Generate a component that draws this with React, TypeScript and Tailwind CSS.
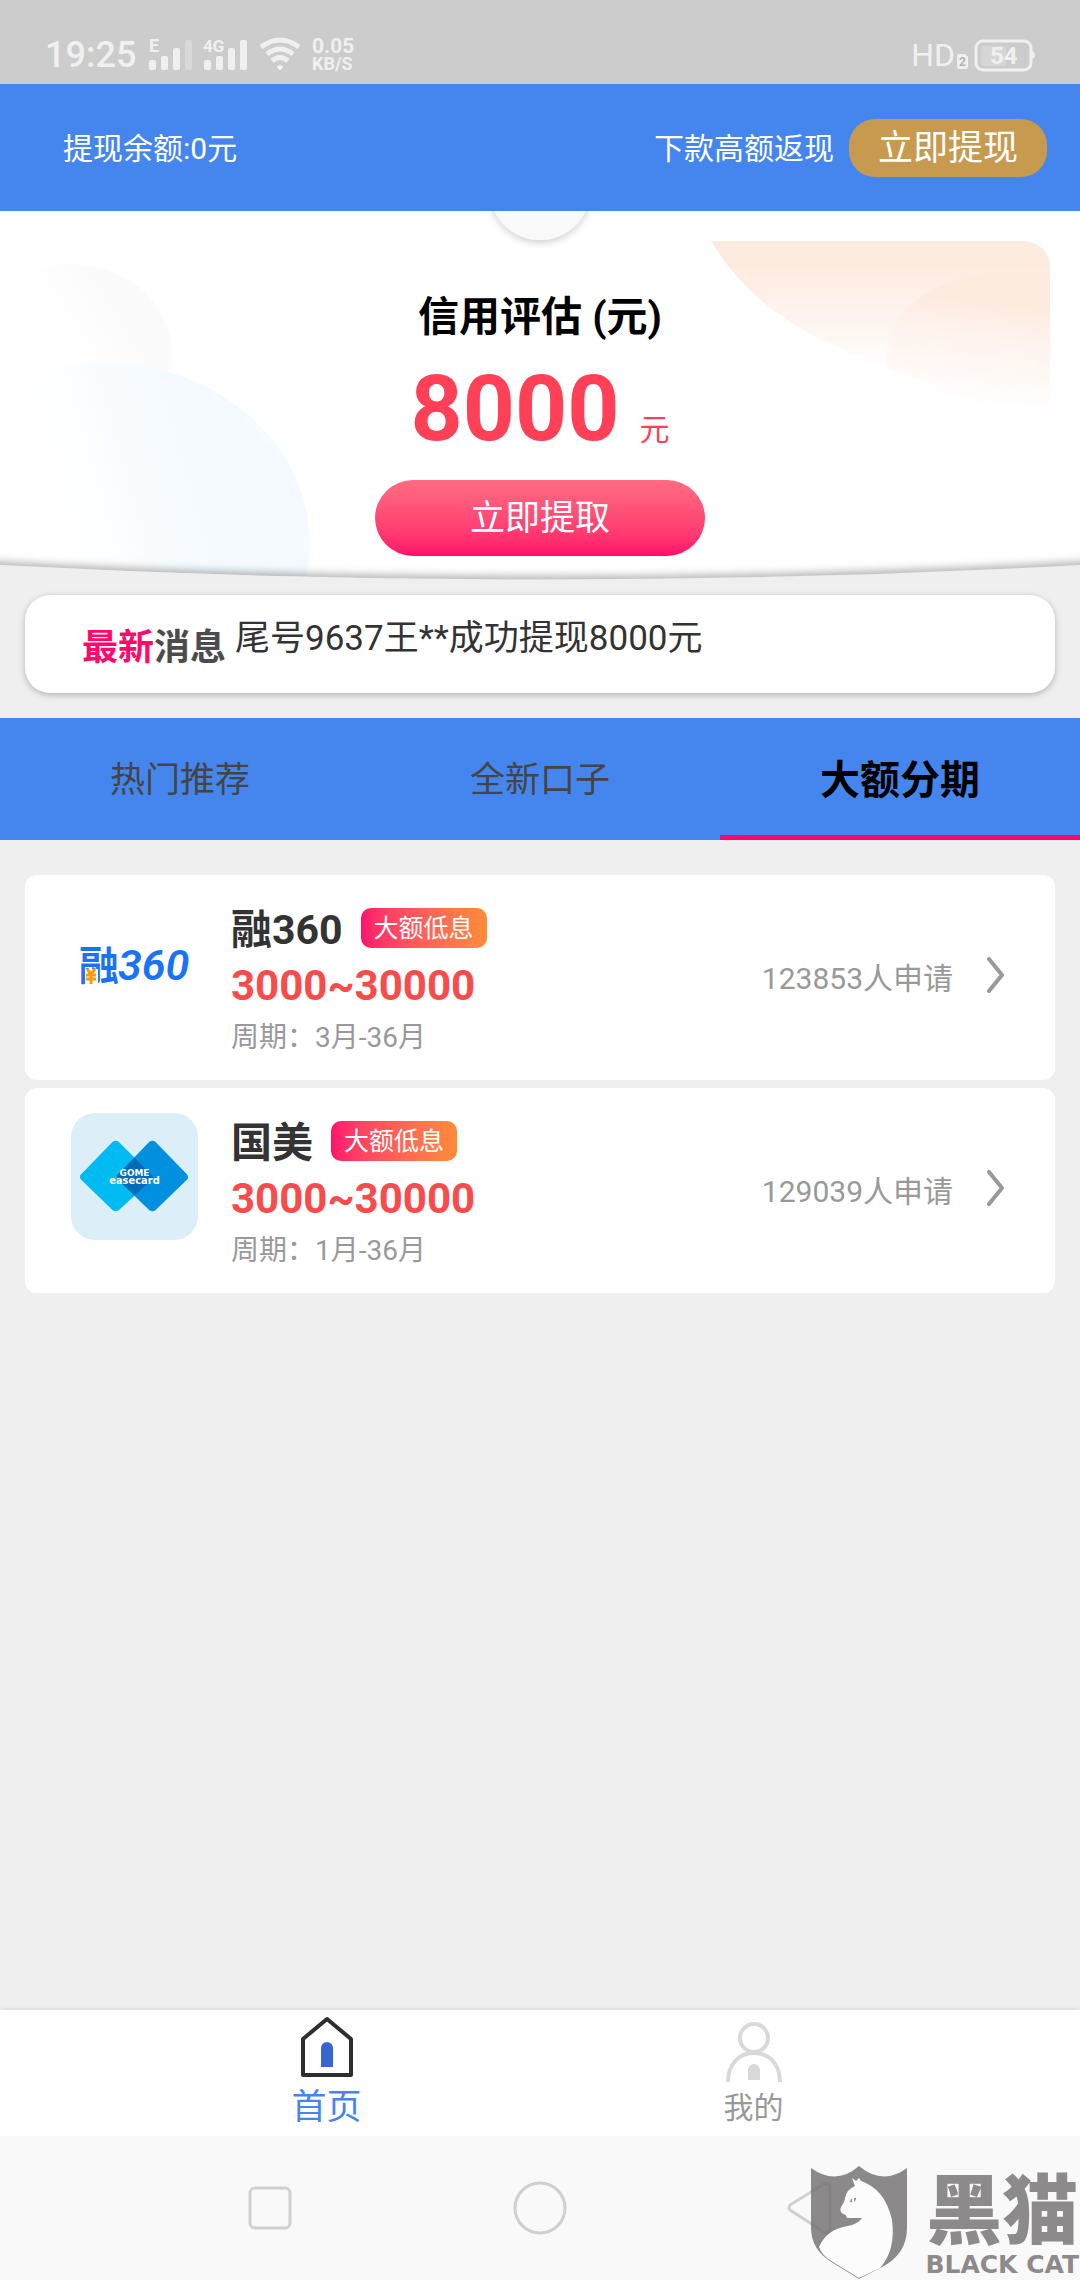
import React, { useState } from 'react';

interface Loan {
  id: string;
  name: string;
  tag: string;
  amount: string;
  period: string;
  applied: number;
  logo: React.ReactNode;
}

const TABS = ['热门推荐', '全新口子', '大额分期'];

function StatusBar() {
  return (
    <div className="flex h-[84px] items-end justify-between bg-[#cccccc] pr-[45px] pb-[11px] pl-[45px] text-[#f0f0f0]">
      <div className="flex items-center">
        <span className="w-[102px] pt-[2px] text-[36px] leading-[36px] font-medium">19:25</span>
        <svg width="100" height="38" viewBox="-2 -3 100 38" fill="#f0f0f0">
          <text x="0" y="14" fontSize="18" fontWeight="700">E</text>
          <rect x="0" y="22" width="7" height="10" rx="2" />
          <rect x="12" y="18" width="7" height="14" rx="2" />
          <rect x="24" y="10" width="7" height="22" rx="2" />
          <rect x="36" y="2" width="7" height="30" rx="2" fill="#d9d9d9" />
          <text x="54" y="14" fontSize="17" fontWeight="700">4G</text>
          <rect x="55" y="22" width="7" height="10" rx="2" />
          <rect x="67" y="18" width="7" height="14" rx="2" />
          <rect x="79" y="10" width="7" height="22" rx="2" />
          <rect x="91" y="2" width="7" height="30" rx="2" />
        </svg>
        <svg className="ml-3" width="42" height="34" viewBox="0 0 42 34" fill="none" stroke="#f0f0f0" strokeWidth="5">
          <path d="M2 10 Q21 -4 40 10" />
          <path d="M8 17 Q21 7 34 17" />
          <path d="M13 24 Q21 17 29 24" />
          <path d="M18 30 Q21 27 24 30 L21 33 Z" fill="#f0f0f0" strokeWidth="1" />
        </svg>
        <div className="ml-[11px] flex flex-col pt-[2px] font-bold">
          <span className="text-[21px] leading-[18px]">0.05</span>
          <span className="text-[18px] leading-[18px]">KB/S</span>
        </div>
      </div>
      <div className="flex items-center">
        <span className="text-[32px] leading-[36px]">HD</span>
        <svg width="80" height="34" viewBox="0 0 80 34">
          <path d="M4 16h6l3 3v10a2 2 0 0 1-2 2H4a2 2 0 0 1-2-2V18a2 2 0 0 1 2-2z" fill="#f0f0f0" />
          <text x="4" y="28" fontSize="12" fontWeight="700" fill="#b4b4b4">2</text>
          <rect x="26" y="8" width="25" height="20" rx="3" fill="#d6d6d6" />
          <rect x="21" y="3" width="55" height="29" rx="7" fill="none" stroke="#f0f0f0" strokeWidth="3" />
          <path d="M77 13q3 1 3 4t-3 4z" fill="#f0f0f0" />
          <text x="35" y="26" fontSize="24" fontWeight="700" fill="#f0f0f0">54</text>
        </svg>
      </div>
    </div>
  );
}

function HeroBackdrop() {
  return (
    <svg
      className="absolute inset-0 h-full w-full"
      viewBox="0 0 1080 370"
      preserveAspectRatio="none"
      aria-hidden="true"
    >
      <defs>
        <linearGradient id="blueFade" gradientUnits="userSpaceOnUse" x1="60" y1="300" x2="200" y2="260">
          <stop offset="0" stopColor="#f4faff" stopOpacity="0" />
          <stop offset="1" stopColor="#f4faff" />
        </linearGradient>
        <linearGradient id="greyFade" gradientUnits="userSpaceOnUse" x1="60" y1="140" x2="140" y2="90">
          <stop offset="0" stopColor="#fbfafa" stopOpacity="0" />
          <stop offset="1" stopColor="#fbfafa" />
        </linearGradient>
        <linearGradient id="peach" gradientUnits="userSpaceOnUse" x1="0" y1="30" x2="0" y2="160">
          <stop offset="0.2" stopColor="#feebe0" />
          <stop offset="0.6" stopColor="#fef4ef" />
          <stop offset="1" stopColor="#ffffff" />
        </linearGradient>
        <linearGradient id="peachInner" gradientUnits="userSpaceOnUse" x1="960" y1="62" x2="945" y2="195">
          <stop offset="0.2" stopColor="#feebe0" />
          <stop offset="0.5" stopColor="#fef4ef" />
          <stop offset="1" stopColor="#ffffff" />
        </linearGradient>
        <clipPath id="heroShape">
          <path d="M0 0H1080V355Q540 384 0 355Z" />
        </clipPath>
        <clipPath id="banner">
          <rect x="31" y="30" width="1019" height="400" rx="26" />
        </clipPath>
        <filter id="soft" filterUnits="userSpaceOnUse" x="-60" y="320" width="1200" height="100">
          <feGaussianBlur stdDeviation="5" />
        </filter>
        <filter id="knob" x="-50%" y="-50%" width="200%" height="200%">
          <feDropShadow dx="0" dy="3" stdDeviation="4" floodColor="#000000" floodOpacity="0.18" />
        </filter>
      </defs>
      <g clipPath="url(#heroShape)">
        <rect width="1080" height="370" fill="#ffffff" />
        <g clipPath="url(#banner)">
          <ellipse cx="70" cy="141" rx="101" ry="88" fill="url(#greyFade)" />
          <ellipse cx="103" cy="334" rx="207" ry="182" fill="#ffffff" />
          <ellipse cx="103" cy="334" rx="207" ry="182" fill="url(#blueFade)" />
          <path d="M711 30C750 95 810 130 884 155C940 174 1000 200 1050 232V30Z" fill="url(#peach)" />
          <path d="M886 158C880 100 940 50 1050 64V235C1000 205 940 174 886 158Z" fill="url(#peachInner)" />
        </g>
        <path d="M-20 356Q540 387 1100 356" fill="none" stroke="#7f7f7c" strokeOpacity="0.8" strokeWidth="8" filter="url(#soft)" />
        <circle cx="540" cy="-21" r="50" fill="#fafafa" filter="url(#knob)" />
      </g>
    </svg>
  );
}

function Rong360Logo() {
  return (
    <svg className="h-[127px] w-[127px]" viewBox="0 0 127 127" role="img" aria-label="融360">
      <text x="8" y="80" fontSize="40" fontWeight="700" fill="#1a73f5">融</text>
      <rect x="14" y="69" width="13" height="16" fill="#ffffff" />
      <path d="M16 69L20 74L24 69M15 75H25M15 79H25M20 74V84" fill="none" stroke="#ff9a0a" strokeWidth="3" />
      <text x="47" y="80" fontSize="43" fontStyle="italic" fontWeight="600" fill="#1a73f5">360</text>
    </svg>
  );
}

function GomeLogo() {
  return (
    <svg className="h-[127px] w-[127px]" viewBox="0 0 128 128" role="img" aria-label="GOME easecard">
      <rect width="128" height="128" rx="24" fill="#dceff9" />
      <path d="M42 29q3-2 6 0L81 62q3 3 0 6L48 98q-3 2-6 0L10 67q-2-3 0-5z" fill="#00baf2" />
      <path d="M79 29q3-2 6 0L117 62q2 3 0 5L85 98q-3 2-6 0L47 67q-2-3 0-5z" fill="#0090df" />
      <path d="M64 45L81 62q3 3 0 6L64 83L47 67q-2-3 0-5z" fill="#006cb8" />
      <g fill="#ffffff" fontFamily="'DejaVu Sans', sans-serif" fontWeight="700" textAnchor="middle">
        <text x="64" y="63" fontSize="9">GOME</text>
        <text x="64" y="72" fontSize="10">easecard</text>
      </g>
    </svg>
  );
}

const LOANS: Loan[] = [
  {
    id: 'rong360',
    name: '融360',
    tag: '大额低息',
    amount: '3000~30000',
    period: '3月-36月',
    applied: 123853,
    logo: <Rong360Logo />,
  },
  {
    id: 'gome',
    name: '国美',
    tag: '大额低息',
    amount: '3000~30000',
    period: '1月-36月',
    applied: 129039,
    logo: <GomeLogo />,
  },
];

function LoanCard({ loan }: { loan: Loan }) {
  return (
    <a href={`#${loan.id}`} className="flex h-[205px] items-start rounded-xl bg-white pr-[50px] pl-[46px]">
      <div className="mt-[25px] shrink-0">{loan.logo}</div>
      <div className="mt-[29px] ml-[33px] flex-1">
        <div className="flex h-12 items-center gap-[18px]">
          <h2 className="pt-1 text-[41px] leading-[48px] font-bold text-[#333333]">{loan.name}</h2>
          <span className="h-10 rounded-[10px] bg-linear-to-r from-[#ff0f6b] to-[#ff8b38] px-[13px] text-[25px] leading-[42px] text-white">
            {loan.tag}
          </span>
        </div>
        <p className="mt-2 text-[42px] leading-[52px] font-bold text-[#f84c4c]">{loan.amount}</p>
        <p className="mt-[6px] text-[28px] leading-[40px] text-[#999999]">周期：{loan.period}</p>
      </div>
      <div className="mt-[82px] flex items-start">
        <span className="text-[30px] leading-[44px] text-[#999999]">{loan.applied}人申请</span>
        <svg className="ml-[34px]" width="18" height="36" viewBox="0 0 18 36" fill="none" stroke="#999999" strokeWidth="4">
          <path d="M2 2L15 18L2 34" strokeLinecap="round" strokeLinejoin="round" />
        </svg>
      </div>
    </a>
  );
}

function Watermark() {
  return (
    <div className="absolute right-[1px] bottom-0 flex items-end gap-4 text-[#8d8a8c]">
      <svg width="99" height="114" viewBox="0 0 99 114">
        <path
          d="M1 2Q26 20 49 0Q73 20 97 2V62Q97 88 72 101L49 113L23 97Q1 84 1 62Z"
          fill="#716d6f"
          fillOpacity="0.8"
        />
        <path
          d="M42 12L46 15L49 12L51 15Q75 23 82 54Q86 84 70 102L49 112L23 96Q12 90 9 81Q17 63 38 60Q48 58 52 52L37 52Q36 48 33 48Q29 45 31 41Q35 35 35 32Q37 23 45 20Z"
          fill="#fcfcfc"
        />
        <path d="M40 36Q41 31 46 32Q46 37 40 36Z" fill="#8d8a8c" />
        <path d="M43 31V37" stroke="#fcfcfc" strokeWidth="2" />
      </svg>
      <div className="flex flex-col items-center">
        <span className="text-[76px] leading-[76px] font-black">黑猫</span>
        <span className="font-['DejaVu_Sans',sans-serif] text-[25px] leading-[30px] font-bold">BLACK CAT</span>
      </div>
    </div>
  );
}

export default function App() {
  const [tab, setTab] = useState(2);

  return (
    <div className="relative flex min-h-screen flex-col bg-[#efefef] font-['Roboto','Noto_Sans_CJK_SC',sans-serif]">
      <StatusBar />

      <header className="flex h-[127px] items-center justify-between bg-[#4586ee] pr-[33px] pl-[63px] text-[30px] text-white">
        <span className="pt-[2px]">提现余额:0元</span>
        <div className="flex items-center gap-[15px]">
          <span className="pt-[2px]">下款高额返现</span>
          <button className="h-[58px] rounded-[26px] bg-[#c79a50] px-[29px] text-[35px] leading-[60px]">立即提现</button>
        </div>
      </header>

      <section className="relative">
        <HeroBackdrop />
        <div className="relative flex flex-col items-center pt-[76px] pb-6">
          <h1 className="text-[41px] leading-[60px] font-bold text-black">信用评估 (元)</h1>
          <p className="mt-[14px] flex items-baseline gap-5 text-[#ff4056]">
            <span className="text-[91px] leading-[96px] font-bold">8000</span>
            <span className="text-[30px] leading-[40px]">元</span>
          </p>
          <button className="mt-[23px] h-[76px] w-[330px] rounded-full bg-linear-to-b from-[#ff6b82] to-[#ff0a6a] pt-[2px] text-[35px] text-white">
            立即提取
          </button>
        </div>
      </section>

      <div className="mx-[25px] mt-[15px] flex h-[98px] items-start rounded-[25px] bg-white pl-[57px] shadow-[0_2px_6px_rgba(0,0,0,0.25)]">
        <strong className="mt-[29px] text-[36px] leading-[48px] font-bold text-[#4c4c4c]">
          <span className="text-[#ff0a6a]">最新</span>消息
        </strong>
        <span className="mt-5 ml-[9px] text-[35px] leading-[48px] text-[#333333]">
          尾号9637王**成功提现8000元
        </span>
      </div>

      <nav className="mt-[25px] grid h-[122px] grid-cols-3 bg-[#4586ee]">
        {TABS.map((label, i) => (
          <button
            key={label}
            onClick={() => setTab(i)}
            className={
              i === tab
                ? 'border-y-[5px] border-t-transparent border-b-[#ff0a6a] pt-1 text-[40px] font-bold text-black'
                : 'pt-1 text-[35px] text-[#444444]'
            }
          >
            {label}
          </button>
        ))}
      </nav>

      <main className="mt-[35px] flex flex-1 flex-col gap-2 px-[25px]">
        {LOANS.map(loan => (
          <LoanCard key={loan.id} loan={loan} />
        ))}
      </main>

      <nav className="grid h-[126px] grid-cols-2 bg-white px-[113px] shadow-[0_0_6px_rgba(0,0,0,0.12)]">
        <a href="#home" className="flex flex-col items-center pt-[6px] text-[35px] leading-[44px] text-[#4586ee]">
          <svg width="56" height="64" viewBox="0 0 56 64">
            <path d="M4 23L28 3L52 23V59H4Z" fill="none" stroke="#2e2e2e" strokeWidth="4" strokeLinejoin="round" />
            <path d="M22 51V32a6 6 0 0 1 12 0V51Z" fill="#3a64d0" />
          </svg>
          <span className="mt-[6px]">首页</span>
        </a>
        <a href="#mine" className="flex flex-col items-center pt-3 text-[30px] leading-[44px] text-[#999999]">
          <svg width="56" height="60" viewBox="0 0 56 60">
            <g fill="none" stroke="#d9d9d9" strokeWidth="4">
              <circle cx="28" cy="16" r="14" />
              <path d="M2 60C2 42 13 31 28 31S54 42 54 60" />
            </g>
            <path d="M22 58V48a6 6 0 0 1 12 0V58Z" fill="#d9d9d9" />
          </svg>
          <span className="mt-1">我的</span>
        </a>
      </nav>

      <div className="grid h-[144px] grid-cols-3 place-items-center bg-[#f9f9f9] px-[135px]">
        <button aria-label="最近任务">
          <svg width="44" height="44" viewBox="0 0 44 44" fill="none" stroke="#d0d0d0" strokeWidth="3">
            <rect x="2" y="2" width="40" height="40" rx="5" />
          </svg>
        </button>
        <button aria-label="主屏幕">
          <svg width="54" height="54" viewBox="0 0 54 54" fill="none" stroke="#d0d0d0" strokeWidth="3">
            <circle cx="27" cy="27" r="25" />
          </svg>
        </button>
        <button aria-label="返回">
          <svg width="46" height="54" viewBox="0 0 46 54" fill="none" stroke="#d0d0d0" strokeWidth="3">
            <path d="M3 24L37 3Q43 1 43 7V47Q43 53 37 51L3 29Q1 27 3 24Z" />
          </svg>
        </button>
      </div>

      <Watermark />
    </div>
  );
}
